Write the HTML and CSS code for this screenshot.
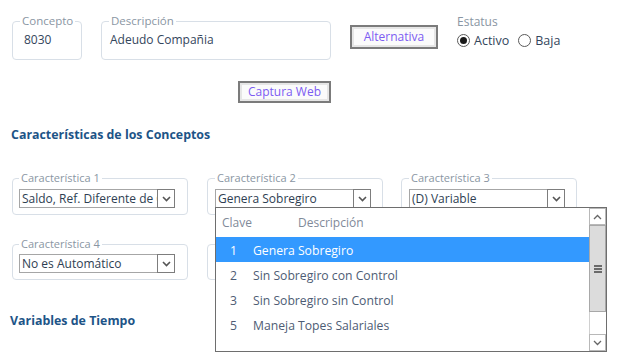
FILE: index.html
```html
<!DOCTYPE html>
<html lang="es">
<head>
<meta charset="utf-8">
<link rel="stylesheet" href="styles.css">
</head>
<body>
<div class="page">
  <div class="top">
    <fieldset class="box concepto">
      <legend>Concepto</legend>
      <div class="val">8030</div>
    </fieldset>
    <fieldset class="box desc">
      <legend>Descripción</legend>
      <div class="val">Adeudo Compañia</div>
    </fieldset>
    <button class="btn alt">Alternativa</button>
    <div class="estatus">
      <div class="elabel">Estatus</div>
      <div class="radios">
        <span class="radio on"></span><span class="rtext">Activo</span>
        <span class="radio"></span><span class="rtext">Baja</span>
      </div>
    </div>
  </div>
  <div class="caprow"><button class="btn cap">Captura Web</button></div>
  <h2 class="sec h1">Características de los Conceptos</h2>
  <div class="chars r1">
    <fieldset class="box ch">
      <legend>Característica 1</legend>
      <div class="select"><span class="stext">Saldo, Ref. Diferente de Cero</span><span class="arrow"><svg width="9" height="6" viewBox="0 0 9 6"><path d="M1 1 L4.5 4.5 L8 1" fill="none" stroke="#555" stroke-width="1.6"/></svg></span></div>
    </fieldset>
    <fieldset class="box ch">
      <legend>Característica 2</legend>
      <div class="select"><span class="stext">Genera Sobregiro</span><span class="arrow"><svg width="9" height="6" viewBox="0 0 9 6"><path d="M1 1 L4.5 4.5 L8 1" fill="none" stroke="#555" stroke-width="1.6"/></svg></span></div>
    </fieldset>
    <fieldset class="box ch">
      <legend>Característica 3</legend>
      <div class="select"><span class="stext">(D) Variable</span><span class="arrow"><svg width="9" height="6" viewBox="0 0 9 6"><path d="M1 1 L4.5 4.5 L8 1" fill="none" stroke="#555" stroke-width="1.6"/></svg></span></div>
    </fieldset>
  </div>
  <div class="chars r2">
    <fieldset class="box ch">
      <legend>Característica 4</legend>
      <div class="select"><span class="stext">No es Automático</span><span class="arrow"><svg width="9" height="6" viewBox="0 0 9 6"><path d="M1 1 L4.5 4.5 L8 1" fill="none" stroke="#555" stroke-width="1.6"/></svg></span></div>
    </fieldset>
    <fieldset class="box ch">
      <legend class="blank"></legend>
      <div class="select"><span class="stext"></span><span class="arrow"></span></div>
    </fieldset>
  </div>
  <h2 class="sec h2">Variables de Tiempo</h2>

  <div class="dropdown">
    <div class="list">
      <div class="dhead"><span class="c1">Clave</span><span class="c2">Descripción</span></div>
      <div class="drow sel"><span class="n">1</span><span>Genera Sobregiro</span></div>
      <div class="drow"><span class="n">2</span><span>Sin Sobregiro con Control</span></div>
      <div class="drow"><span class="n">3</span><span>Sin Sobregiro sin Control</span></div>
      <div class="drow"><span class="n">5</span><span>Maneja Topes Salariales</span></div>
    </div>
    <div class="scroll">
      <div class="sbtn"><svg width="9" height="6" viewBox="0 0 9 6"><path d="M1 5 L4.5 1.5 L8 5" fill="none" stroke="#666" stroke-width="1.3"/></svg></div>
      <div class="thumb"><span class="grip"></span><span class="grip"></span><span class="grip"></span></div>
      <div class="track"></div>
      <div class="sbtn"><svg width="9" height="6" viewBox="0 0 9 6"><path d="M1 1 L4.5 4.5 L8 1" fill="none" stroke="#666" stroke-width="1.3"/></svg></div>
    </div>
  </div>
</div>
</body>
</html>
```
FILE: styles.css
```css
* { box-sizing: border-box; }
html, body { margin: 0; padding: 0; background: #fff; }
body {
  font-family: "Open Sans", "Noto Sans", sans-serif;
  font-size: 12px;
  color: #3b4a5e;
  width: 634px;
  height: 355px;
  overflow: hidden;
}
.page { position: relative; padding-left: 12px; }

.box {
  margin: 0;
  border: 1px solid #d8dfe7;
  border-radius: 4px;
  padding: 0 10px 0 7px;
  min-width: 0;
}
.box legend {
  font-size: 11px;
  line-height: 14px;
  color: #8a96a3;
  padding: 0 2px;
}
.box legend.blank { height: 14px; width: 60px; }

.top { display: flex; align-items: flex-start; padding-top: 14px; }
.concepto { width: 70px; }
.desc { width: 230px; margin-left: 19px; }
.concepto legend, .desc legend { font-size: 11.5px; }
.val {
  line-height: 20px;
  padding: 2px 0 8px 4px;
  font-size: 12px;
  color: #34465c;
  height: 31px;
}
.desc .val { padding-left: 1px; }

.btn {
  font-family: "Open Sans", "Noto Sans", sans-serif;
  font-size: 12px;
  color: #7c5cf2;
  background: #fbfbfb;
  border: 2px solid #7b7b7b;
  box-shadow: inset 0 0 0 2px #e6e6e6;
  padding: 0;
  margin: 0;
  line-height: 16px;
}
.alt { width: 88px; height: 24px; margin-left: 19px; margin-top: 11px; }
.estatus { margin-left: 19px; }
.elabel { line-height: 14px; color: #8a96a3; font-size: 12px; margin-top: 1px; }
.radios { display: flex; align-items: center; margin-top: 4px; height: 14px; }
.radio {
  width: 13px; height: 13px; border-radius: 50%;
  border: 1px solid #5a5a5a; background: #fff;
  display: inline-flex; align-items: center; justify-content: center;
}
.radio.on::after { content: ""; width: 7px; height: 7px; border-radius: 50%; background: #1a1a1a; }
.rtext { margin-left: 4px; margin-right: 9px; font-size: 12.5px; color: #34465c; }

.caprow { padding-left: 226px; margin-top: 21px; }
.cap { width: 93px; height: 22px; }

.sec {
  margin: 0;
  font-size: 12.4px;
  font-weight: 700;
  line-height: 20px;
  color: #1d5487;
  margin-left: -1px;
}
.h1 { margin-top: 22px; }
.h2 { margin-top: 31px; margin-left: -2px; }

.chars { display: flex; }
.r1 { margin-top: 26px; }
.r2 { margin-top: 22px; }
.ch { width: 176px; padding: 0 12px 6px 6px; }
.ch + .ch { margin-left: 19px; padding-left: 7px; }
.ch + .ch + .ch { margin-left: 18px; }
.r1 .ch { padding-top: 4px; }
.r2 .ch { padding-top: 3px; }
.select {
  display: flex;
  height: 19px;
  border: 1px solid #a6a6a6;
  width: 156px;
  background: #fff;
}
.stext {
  flex: 1;
  overflow: hidden;
  white-space: nowrap;
  line-height: 17px;
  padding-left: 2px;
  font-size: 12px;
  color: #2e3e52;
}
.arrow {
  width: 18px; height: 19px; margin: -1px -1px 0 0;
  border: 1px solid #7d7d7d;
  display: flex; align-items: center; justify-content: center;
  background: #fff;
}

.dropdown {
  position: absolute;
  left: 215px;
  top: 207px;
  width: 392px;
  height: 145px;
  border: 1px solid #6e6e6e;
  background: #fff;
  display: flex;
}
.list { flex: 1; }
.dhead { height: 29px; display: flex; align-items: center; color: #7f8a99; font-size: 12px; }
.dhead .c1 { margin-left: 6px; width: 76px; }
.drow { height: 25px; display: flex; align-items: center; font-size: 12.2px; color: #4e5c74; padding-top: 1px; }
.drow .n { width: 37px; padding-left: 14px; }
.drow.sel { background: #3399ff; color: #fff; }
.scroll { width: 17px; display: flex; flex-direction: column; }
.sbtn {
  height: 17px; border: 1px solid #b8b8b8; background: #fff;
  display: flex; align-items: center; justify-content: center;
}
.thumb {
  height: 87px; background: #dcdcdc; border: 1px solid #a8a8a8;
  display: flex; flex-direction: column; align-items: center; justify-content: center; gap: 1px;
}
.grip { width: 8px; height: 2px; background: #6a6a6a; }
.track { flex: 1; background: #fff; border-left: 1px solid #d0d0d0; }
```
